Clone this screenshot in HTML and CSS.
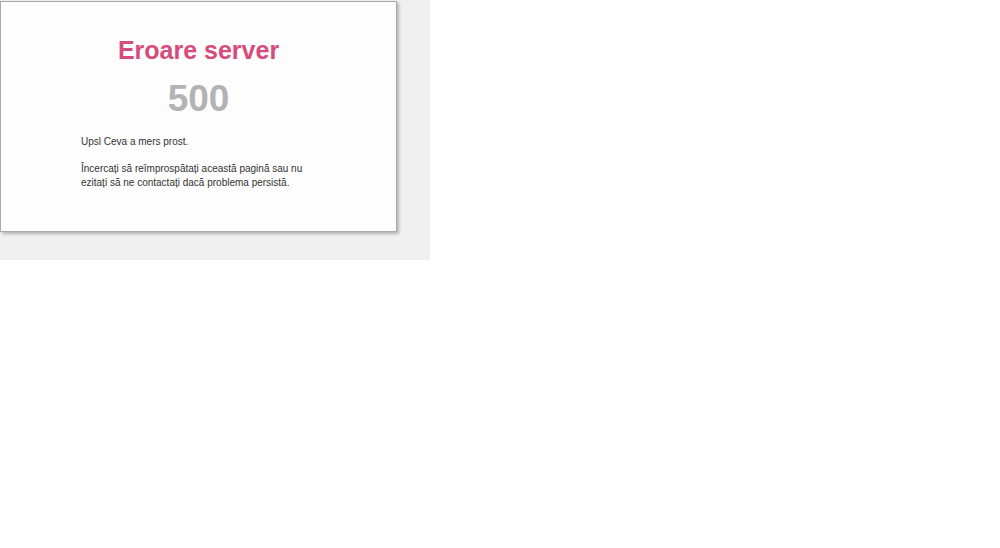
FILE: index.html
```html
<!DOCTYPE html>
<html lang="ro">
<head>
    <meta charset="UTF-8">
    <meta name="viewport" content="width=device-width, initial-scale=1.0">
    <title>Eroare server</title>
    <link rel="stylesheet" href="styles.css">
</head>
<body>
    <div class="frame">
        <div class="error-box">
            <h1>Eroare server</h1>
            <div class="code">500</div>
            <div class="message">
                <p>Upsl Ceva a mers prost.</p>
                <p>Încercați să reîmprospătați această pagină sau nu ezitați să ne contactați dacă problema persistă.</p>
            </div>
        </div>
    </div>
</body>
</html>
```

FILE: styles.css
```css
body {
    margin: 0;
    background: #fff;
    font-family: "Liberation Sans", Arial, sans-serif;
}
.frame {
    width: 430px;
    height: 260px;
    padding-top: 1px;
    box-sizing: border-box;
    background-color: #f0f0f0;
}
.error-box {
    width: 397px;
    height: 231px;
    box-sizing: border-box;
    padding-top: 34px;
    background-color: #fdfdfd;
    border: 1px solid #a8a8a8;
    box-shadow: 2px 2px 3px rgba(0, 0, 0, 0.25);
}
h1 {
    margin: 0;
    text-align: center;
    font-size: 25px;
    line-height: 29px;
    font-weight: bold;
    color: #d64c7c;
}
.code {
    margin-top: 13px;
    text-align: center;
    font-size: 37px;
    line-height: 41px;
    font-weight: bold;
    color: #b3b3b3;
}
.message {
    width: 236px;
    margin: 16px 0 0 80px;
    font-size: 10px;
    line-height: 14px;
    color: #333;
}
.message p {
    margin: 0 0 13px;
}
```
